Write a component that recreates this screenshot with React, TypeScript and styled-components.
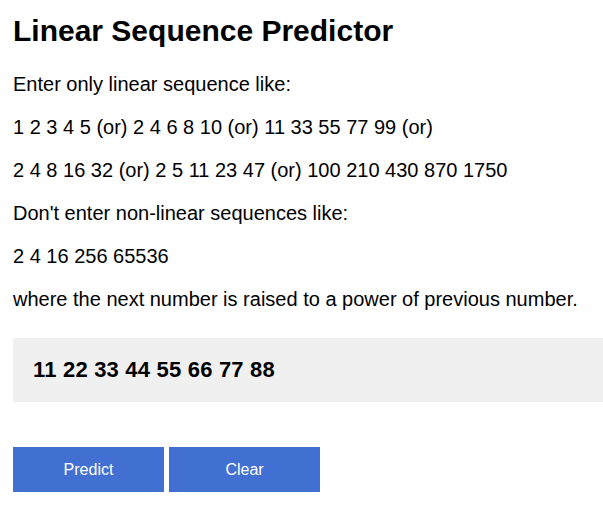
import React, { useState } from "react";
import styled, { createGlobalStyle } from "styled-components";

const GlobalStyle = createGlobalStyle`
  html, body {
    margin: 0;
    padding: 0;
    background: #ffffff;
    overflow: hidden;
  }
  body {
    font-family: "Liberation Sans", Arial, sans-serif;
    color: #000000;
  }
`;

const Page = styled.main`
  display: flex;
  flex-direction: column;
  align-items: flex-start;
  padding: 14px 0 0 13px;
`;

const Title = styled.h1`
  margin: 0 0 25px 0;
  font-size: 30px;
  font-weight: bold;
  line-height: normal;
`;

const Text = styled.p`
  margin: 0 0 20px 0;
  font-size: 20px;
  line-height: normal;
`;

const SequenceInput = styled.input`
  box-sizing: border-box;
  width: 100%;
  height: 64px;
  margin: 7px 0 45px 0;
  padding: 0 20px;
  border: none;
  outline: none;
  background: #f0f0f0;
  font-family: "Liberation Sans", Arial, sans-serif;
  font-size: 22px;
  letter-spacing: 0.2px;
  font-weight: bold;
  color: #000000;
`;

const ButtonRow = styled.div`
  display: flex;
  gap: 5px;
`;

const ActionButton = styled.button`
  width: 151px;
  height: 45px;
  border: none;
  padding: 0;
  background: #426fd2;
  color: #ffffff;
  font-family: "Liberation Sans", Arial, sans-serif;
  font-size: 16px;
  cursor: pointer;
`;

export default function App() {
  const [value, setValue] = useState("11 22 33 44 55 66 77 88");
  return (
    <>
      <GlobalStyle />
      <Page>
        <Title>Linear Sequence Predictor</Title>
        <Text>Enter only linear sequence like:</Text>
        <Text>1 2 3 4 5 (or) 2 4 6 8 10 (or) 11 33 55 77 99 (or)</Text>
        <Text>2 4 8 16 32 (or) 2 5 11 23 47 (or) 100 210 430 870 1750</Text>
        <Text>Don't enter non-linear sequences like:</Text>
        <Text>2 4 16 256 65536</Text>
        <Text>where the next number is raised to a power of previous number.</Text>
        <SequenceInput value={value} onChange={(e) => setValue(e.target.value)} />
        <ButtonRow>
          <ActionButton>Predict</ActionButton>
          <ActionButton onClick={() => setValue("")}>Clear</ActionButton>
        </ButtonRow>
      </Page>
    </>
  );
}
